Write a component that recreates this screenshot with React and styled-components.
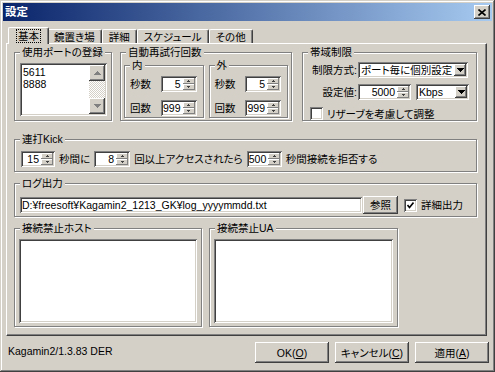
import React from 'react';
import styled, { createGlobalStyle, css } from 'styled-components';

const GlobalStyle = createGlobalStyle`
  html, body {
    margin: 0;
    padding: 0;
    background: #d4d0c8;
  }
  body {
    font-family: "Liberation Sans", "Noto Sans CJK JP", sans-serif;
    font-size: 10.5px;
    color: #000;
  }
  * {
    font-feature-settings: "palt";
  }
`;

const raised = css`
  box-shadow: inset -1px -1px #404040, inset 1px 1px #fff, inset -2px -2px #808080, inset 2px 2px #d4d0c8;
`;

const sunken = css`
  box-shadow: inset 1px 1px #808080, inset -1px -1px #fff, inset 2px 2px #404040, inset -2px -2px #d4d0c8;
`;

const Window = styled.div`
  width: 495px;
  height: 372px;
  box-sizing: border-box;
  padding: 3px;
  background: #d4d0c8;
  display: flex;
  flex-direction: column;
  box-shadow: inset -1px -1px #404040, inset 1px 1px #d4d0c8, inset -2px -2px #808080, inset 2px 2px #fff;
`;

const TitleBar = styled.div`
  height: 18px;
  display: flex;
  align-items: center;
  padding: 0 2px 0 2px;
  background: linear-gradient(to right, #0a246a, #a6caf0);
  color: #fff;
`;

const Title = styled.span`
  font-weight: bold;
  font-size: 11.5px;
  line-height: 18px;
`;

const CloseButton = styled.div`
  margin-left: auto;
  width: 16px;
  height: 14px;
  background: #d4d0c8;
  display: flex;
  align-items: center;
  justify-content: center;
  ${raised}
`;

const TabStrip = styled.div`
  display: flex;
  align-items: flex-end;
  height: 16px;
  margin-top: 6px;
  padding-left: 7px;
`;

const Tab = styled.div`
  position: relative;
  height: ${p => (p.$active ? 17 : 14)}px;
  margin: ${p => (p.$active ? '0 -2px -1px' : '0')};
  padding: 0 ${p => (p.$active ? 8 : 6)}px;
  box-sizing: border-box;
  display: flex;
  align-items: center;
  background: #d4d0c8;
  border-top: 1px solid #fff;
  border-left: 1px solid #fff;
  border-right: 1px solid #404040;
  border-radius: 2px 2px 0 0;
  box-shadow: inset -1px 0 #808080;
  line-height: 12px;
  z-index: ${p => (p.$active ? 1 : 0)};
`;

const Focus = styled.span`
  outline: 1px dotted #000;
  padding: 0 1px;
`;

const Panel = styled.div`
  height: 293px;
  margin: 0 5px 0 3px;
  box-sizing: border-box;
  padding: 2px 8px 0 7px;
  border-top: 1px solid #fff;
  border-left: 1px solid #fff;
  border-right: 1px solid #404040;
  border-bottom: 1px solid #404040;
  box-shadow: inset -1px -1px #808080;
  display: flex;
  flex-direction: column;
`;

const Row = styled.div`
  display: flex;
  gap: ${p => p.$gap || 0}px;
  margin-top: ${p => p.$mt || 0}px;
`;

const Group = styled.fieldset`
  margin: 0;
  margin-left: ${p => p.$ml || 0}px;
  padding: 0;
  min-width: 0;
  width: ${p => p.$w}px;
  height: ${p => p.$h}px;
  box-sizing: border-box;
  border: 1px solid #808080;
  box-shadow: inset 1px 1px #fff, 1px 1px #fff;
`;

const Legend = styled.legend`
  margin-left: 5px;
  padding: 0 2px;
  line-height: 13px;
  background: #d4d0c8;
`;

const GroupBody = styled.div`
  padding: ${p => p.$pad || '0'};
  display: flex;
  flex-direction: ${p => (p.$col ? 'column' : 'row')};
  align-items: ${p => p.$align || 'stretch'};
  gap: ${p => p.$gap || 0}px;
`;

const ListBox = styled.div`
  width: ${p => p.$w}px;
  height: ${p => p.$h}px;
  box-sizing: border-box;
  padding: 2px;
  background: #fff;
  display: flex;
  ${sunken}
`;

const ListItems = styled.div`
  flex: 1;
  padding: 1px 1px;
  line-height: 12px;
`;

const ScrollBar = styled.div`
  width: 16px;
  display: flex;
  flex-direction: column;
`;

const ScrollButton = styled.div`
  height: 16px;
  background: #d4d0c8;
  display: flex;
  align-items: center;
  justify-content: center;
  ${raised}
`;

const ScrollTrack = styled.div`
  flex: 1;
  background-image: repeating-conic-gradient(#fff 0 25%, #d4d0c8 0 50%);
  background-size: 2px 2px;
`;

const FieldRow = styled.div`
  display: flex;
  align-items: center;
  justify-content: ${p => p.$justify || 'flex-start'};
  gap: ${p => p.$gap || 0}px;
  height: ${p => p.$h || 16}px;
  margin-top: ${p => p.$mt || 0}px;
`;

const Label = styled.span`
  white-space: nowrap;
  line-height: 12px;
  width: ${p => (p.$w ? `${p.$w}px` : 'auto')};
  margin-left: ${p => p.$ml || 0}px;
  text-align: ${p => (p.$right ? 'right' : 'left')};
`;

const SpinBox = styled.div`
  width: ${p => p.$w}px;
  height: 16px;
  box-sizing: border-box;
  padding: 2px;
  background: #fff;
  display: flex;
  ${sunken}
`;

const SpinValue = styled.span`
  flex: 1;
  text-align: right;
  padding-right: 2px;
  line-height: 12px;
`;

const SpinButtons = styled.div`
  width: 12px;
  display: flex;
  flex-direction: column;
`;

const SpinArrow = styled.div`
  flex: 1;
  background: #d4d0c8;
  display: flex;
  align-items: center;
  justify-content: center;
  box-shadow: inset -1px -1px #808080, inset 1px 1px #fff;
`;

const Combo = styled.div`
  width: ${p => p.$w}px;
  height: 16px;
  margin-left: ${p => p.$ml || 0}px;
  box-sizing: border-box;
  padding: 2px;
  background: #fff;
  display: flex;
  ${sunken}
`;

const ComboText = styled.span`
  flex: 1;
  padding-left: 1px;
  line-height: 12px;
  white-space: nowrap;
  overflow: hidden;
`;

const ComboButton = styled.div`
  width: 12px;
  background: #d4d0c8;
  display: flex;
  align-items: center;
  justify-content: center;
  ${raised}
`;

const CheckBox = styled.div`
  width: 13px;
  height: 13px;
  box-sizing: border-box;
  background: #fff;
  display: flex;
  align-items: center;
  justify-content: center;
  margin-left: ${p => p.$ml || 0}px;
  ${sunken}
`;

const TextInput = styled.div`
  width: ${p => p.$w}px;
  height: 16px;
  box-sizing: border-box;
  padding: 2px 2px;
  background: #fff;
  line-height: 12px;
  white-space: nowrap;
  overflow: hidden;
  ${sunken}
`;

const Button = styled.button`
  width: ${p => p.$w}px;
  height: ${p => p.$h}px;
  margin: 0;
  margin-left: ${p => p.$ml || 0}px;
  padding: 0;
  border: none;
  background: #d4d0c8;
  color: #000;
  font-family: inherit;
  font-size: inherit;
  line-height: 12px;
  ${raised}
`;

const Footer = styled.div`
  flex: 1;
  display: flex;
  align-items: flex-start;
  padding: 6px 3px 0 5px;
`;

const Status = styled.span`
  flex: 1;
  margin-top: 3px;
  line-height: 12px;
`;

const ButtonBar = styled.div`
  display: flex;
  gap: 6px;
`;

const Arrow = ({ up, color = '#000', w = 7, h = 4 }) => (
  <svg width={w} height={h} viewBox={`0 0 ${w} ${h}`} shapeRendering="crispEdges">
    <polygon
      points={up ? `0,${h} ${w},${h} ${w / 2},0` : `0,0 ${w},0 ${w / 2},${h}`}
      fill={color}
    />
  </svg>
);

const Spin = ({ w, value }) => (
  <SpinBox $w={w}>
    <SpinValue>{value}</SpinValue>
    <SpinButtons>
      <SpinArrow><Arrow up w={5} h={2} color="#404040" /></SpinArrow>
      <SpinArrow><Arrow w={5} h={2} color="#404040" /></SpinArrow>
    </SpinButtons>
  </SpinBox>
);

const ComboBox = ({ w, ml, value }) => (
  <Combo $w={w} $ml={ml}>
    <ComboText>{value}</ComboText>
    <ComboButton><Arrow w={7} h={4} /></ComboButton>
  </Combo>
);

const Check = ({ checked, ml }) => (
  <CheckBox $ml={ml}>
    {checked && (
      <svg width="7" height="7" viewBox="0 0 7 7">
        <polyline points="0.5,3 2.5,5.5 6.5,0.5" fill="none" stroke="#000" strokeWidth="1.6" />
      </svg>
    )}
  </CheckBox>
);

const RetryGroup = ({ title }) => (
  <Group $w={80} $h={59}>
    <Legend>{title}</Legend>
    <GroupBody $col $gap={8} $pad="4px 6px 0 5px">
      <FieldRow $justify="space-between">
        <Label>秒数</Label>
        <Spin w={36} value="5" />
      </FieldRow>
      <FieldRow $justify="space-between">
        <Label>回数</Label>
        <Spin w={36} value="999" />
      </FieldRow>
    </GroupBody>
  </Group>
);

const tabs = ['基本', '鏡置き場', '詳細', 'スケジュール', 'その他'];

export default function App() {
  return (
    <>
      <GlobalStyle />
      <Window>
        <TitleBar>
          <Title>設定</Title>
          <CloseButton>
            <svg width="8" height="7" viewBox="0 0 8 7">
              <path d="M0.5 0.5 L7.5 6.5 M7.5 0.5 L0.5 6.5" stroke="#000" strokeWidth="1.6" />
            </svg>
          </CloseButton>
        </TitleBar>

        <TabStrip>
          {tabs.map((t, i) => (
            <Tab key={t} $active={i === 0}>
              {i === 0 ? <Focus>{t}</Focus> : t}
            </Tab>
          ))}
        </TabStrip>

        <Panel>
          <Row $gap={8}>
            <Group $w={98} $h={75}>
              <Legend>使用ポートの登録</Legend>
              <GroupBody $pad="4px 0 0 5px">
                <ListBox $w={87} $h={53}>
                  <ListItems>
                    <div>5611</div>
                    <div>8888</div>
                  </ListItems>
                  <ScrollBar>
                    <ScrollButton><Arrow up w={7} h={4} color="#808080" /></ScrollButton>
                    <ScrollTrack />
                    <ScrollButton><Arrow w={7} h={4} color="#808080" /></ScrollButton>
                  </ScrollBar>
                </ListBox>
              </GroupBody>
            </Group>

            <Group $w={172} $h={75}>
              <Legend>自動再試行回数</Legend>
              <GroupBody $gap={5} $pad="0 3px">
                <RetryGroup title="内" />
                <RetryGroup title="外" />
              </GroupBody>
            </Group>

            <Group $w={175} $h={75} $ml={2}>
              <Legend>帯域制限</Legend>
              <GroupBody $col $gap={6} $pad="3px 0 0 4px">
                <FieldRow $gap={1}>
                  <Label $w={50} $right>制限方式:</Label>
                  <ComboBox w={110} value="ポート毎に個別設定" />
                </FieldRow>
                <FieldRow $gap={1}>
                  <Label $w={50} $right>設定値:</Label>
                  <Spin w={53} value="5000" />
                  <ComboBox w={53} ml={4} value="Kbps" />
                </FieldRow>
                <FieldRow $gap={4} $h={13} $mt={1}>
                  <Check ml={3} />
                  <Label>リザーブを考慮して調整</Label>
                </FieldRow>
              </GroupBody>
            </Group>
          </Row>

          <Row $mt={12}>
            <Group $w={463} $h={39}>
              <Legend>連打Kick</Legend>
              <GroupBody $align="center" $gap={4} $pad="5px 0 0 6px">
                <Spin w={34} value="15" />
                <Label>秒間に</Label>
                <Spin w={36} value="8" />
                <Label>回以上アクセスされたら</Label>
                <Spin w={35} value="500" />
                <Label>秒間接続を拒否する</Label>
              </GroupBody>
            </Group>
          </Row>

          <Row $mt={5}>
            <Group $w={463} $h={40}>
              <Legend>ログ出力</Legend>
              <GroupBody $align="center" $pad="6px 0 0 5px">
                <TextInput $w={342}>D:¥freesoft¥Kagamin2_1213_GK¥log_yyyymmdd.txt</TextInput>
                <Button $w={35} $h={18} $ml={1}>参照</Button>
                <Check checked ml={6} />
                <Label $ml={4}>詳細出力</Label>
              </GroupBody>
            </Group>
          </Row>

          <Row $mt={5} $gap={7}>
            <Group $w={188} $h={105}>
              <Legend>接続禁止ホスト</Legend>
              <GroupBody $pad="4px 4px 0">
                <ListBox $w={178} $h={84} />
              </GroupBody>
            </Group>
            <Group $w={189} $h={105}>
              <Legend>接続禁止UA</Legend>
              <GroupBody $pad="4px 4px 0">
                <ListBox $w={179} $h={84} />
              </GroupBody>
            </Group>
          </Row>
        </Panel>

        <Footer>
          <Status>Kagamin2/1.3.83 DER</Status>
          <ButtonBar>
            <Button $w={74} $h={21}>OK(<u>O</u>)</Button>
            <Button $w={74} $h={21}>キャンセル(<u>C</u>)</Button>
            <Button $w={74} $h={21}>適用(<u>A</u>)</Button>
          </ButtonBar>
        </Footer>
      </Window>
    </>
  );
}
